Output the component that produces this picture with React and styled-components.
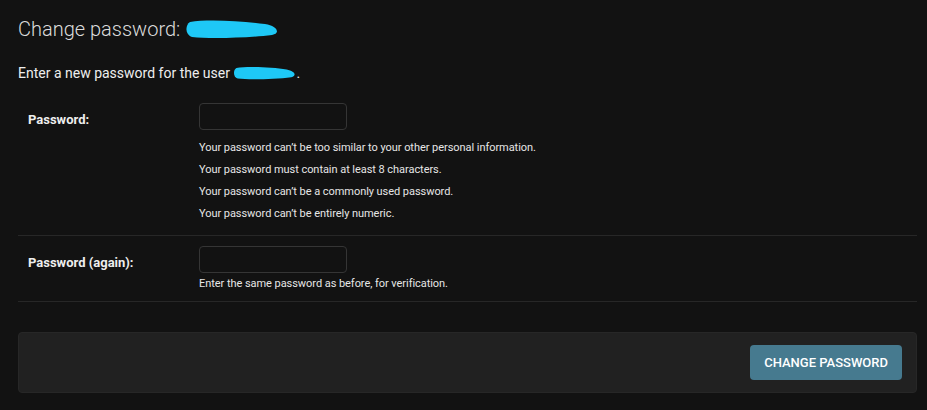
import React from 'react';
import styled, { createGlobalStyle } from 'styled-components';

const GlobalStyle = createGlobalStyle`
  html, body {
    margin: 0;
    padding: 0;
    background: #121212;
  }
  body {
    font-family: Roboto, "Liberation Sans", sans-serif;
    color: #eeeeee;
  }
`;

const Page = styled.div`
  padding: 17px 10px 0 18px;
`;

const Title = styled.h1`
  margin: 0 0 23px;
  font-size: 20px;
  line-height: 24px;
  font-weight: 300;
  color: #dcdcdc;
  display: flex;
  align-items: center;
`;

const Intro = styled.p`
  margin: 0 0 11px;
  font-size: 14px;
  line-height: 18px;
  display: flex;
  align-items: center;
`;

const Row = styled.div`
  display: flex;
  padding: 10px;
  border-bottom: 1px solid #272727;
`;

const Label = styled.label`
  width: 171px;
  flex-shrink: 0;
  padding-top: 9px;
  font-size: 13px;
  line-height: 16px;
  font-weight: 700;
  color: #eeeeee;
`;

const Field = styled.div`
  display: flex;
  flex-direction: column;
`;

const Input = styled.input`
  box-sizing: border-box;
  width: 148px;
  height: 27px;
  margin: 0;
  background: #121212;
  border: 1px solid #353535;
  border-radius: 4px;
  color: #eeeeee;
  outline: none;
`;

const HelpList = styled.ul`
  list-style: none;
  margin: 7px 0 0;
  padding: 0;
`;

const HelpItem = styled.li`
  font-size: 11px;
  line-height: 22px;
  letter-spacing: -0.05px;
  color: #e6e6e6;
`;

const Help = styled.div`
  margin-top: 3px;
  font-size: 11px;
  line-height: 15px;
  letter-spacing: -0.05px;
  color: #e6e6e6;
`;

const SubmitRow = styled.div`
  margin-top: 30px;
  display: flex;
  justify-content: flex-end;
  padding: 12px 14px;
  background: #212121;
  border: 1px solid #272727;
  border-radius: 4px;
`;

const Button = styled.button`
  height: 35px;
  padding: 0 14px;
  border: none;
  border-radius: 4px;
  background: #467a8f;
  color: #ffffff;
  font-family: Roboto, "Liberation Sans", sans-serif;
  font-size: 13px;
  font-weight: 500;
  text-transform: uppercase;
  cursor: pointer;
`;

const Scribble = ({ width, height }) => (
  <svg width={width} height={height} viewBox="0 0 94 20" preserveAspectRatio="none">
    <path
      d="M5 3 C 22 0, 58 2, 80 5 C 92 7, 96 14, 87 16 C 62 19, 24 20, 7 18 C 0 16, 0 6, 5 3 Z"
      fill="#1ec8f6"
    />
  </svg>
);

const helpTexts = [
  'Your password can’t be too similar to your other personal information.',
  'Your password must contain at least 8 characters.',
  'Your password can’t be a commonly used password.',
  'Your password can’t be entirely numeric.',
];

export default function App() {
  return (
    <Page>
      <GlobalStyle />
      <Title>
        Change password:&nbsp;<Scribble width={94} height={20} />
      </Title>
      <Intro>
        Enter a new password for the user&nbsp;<Scribble width={63} height={14} />.
      </Intro>
      <form onSubmit={e => e.preventDefault()}>
        <Row>
          <Label htmlFor="id_password1">Password:</Label>
          <Field>
            <Input id="id_password1" type="password" />
            <HelpList>
              {helpTexts.map(text => (
                <HelpItem key={text}>{text}</HelpItem>
              ))}
            </HelpList>
          </Field>
        </Row>
        <Row>
          <Label htmlFor="id_password2">Password (again):</Label>
          <Field>
            <Input id="id_password2" type="password" />
            <Help>Enter the same password as before, for verification.</Help>
          </Field>
        </Row>
        <SubmitRow>
          <Button type="submit">Change password</Button>
        </SubmitRow>
      </form>
    </Page>
  );
}
